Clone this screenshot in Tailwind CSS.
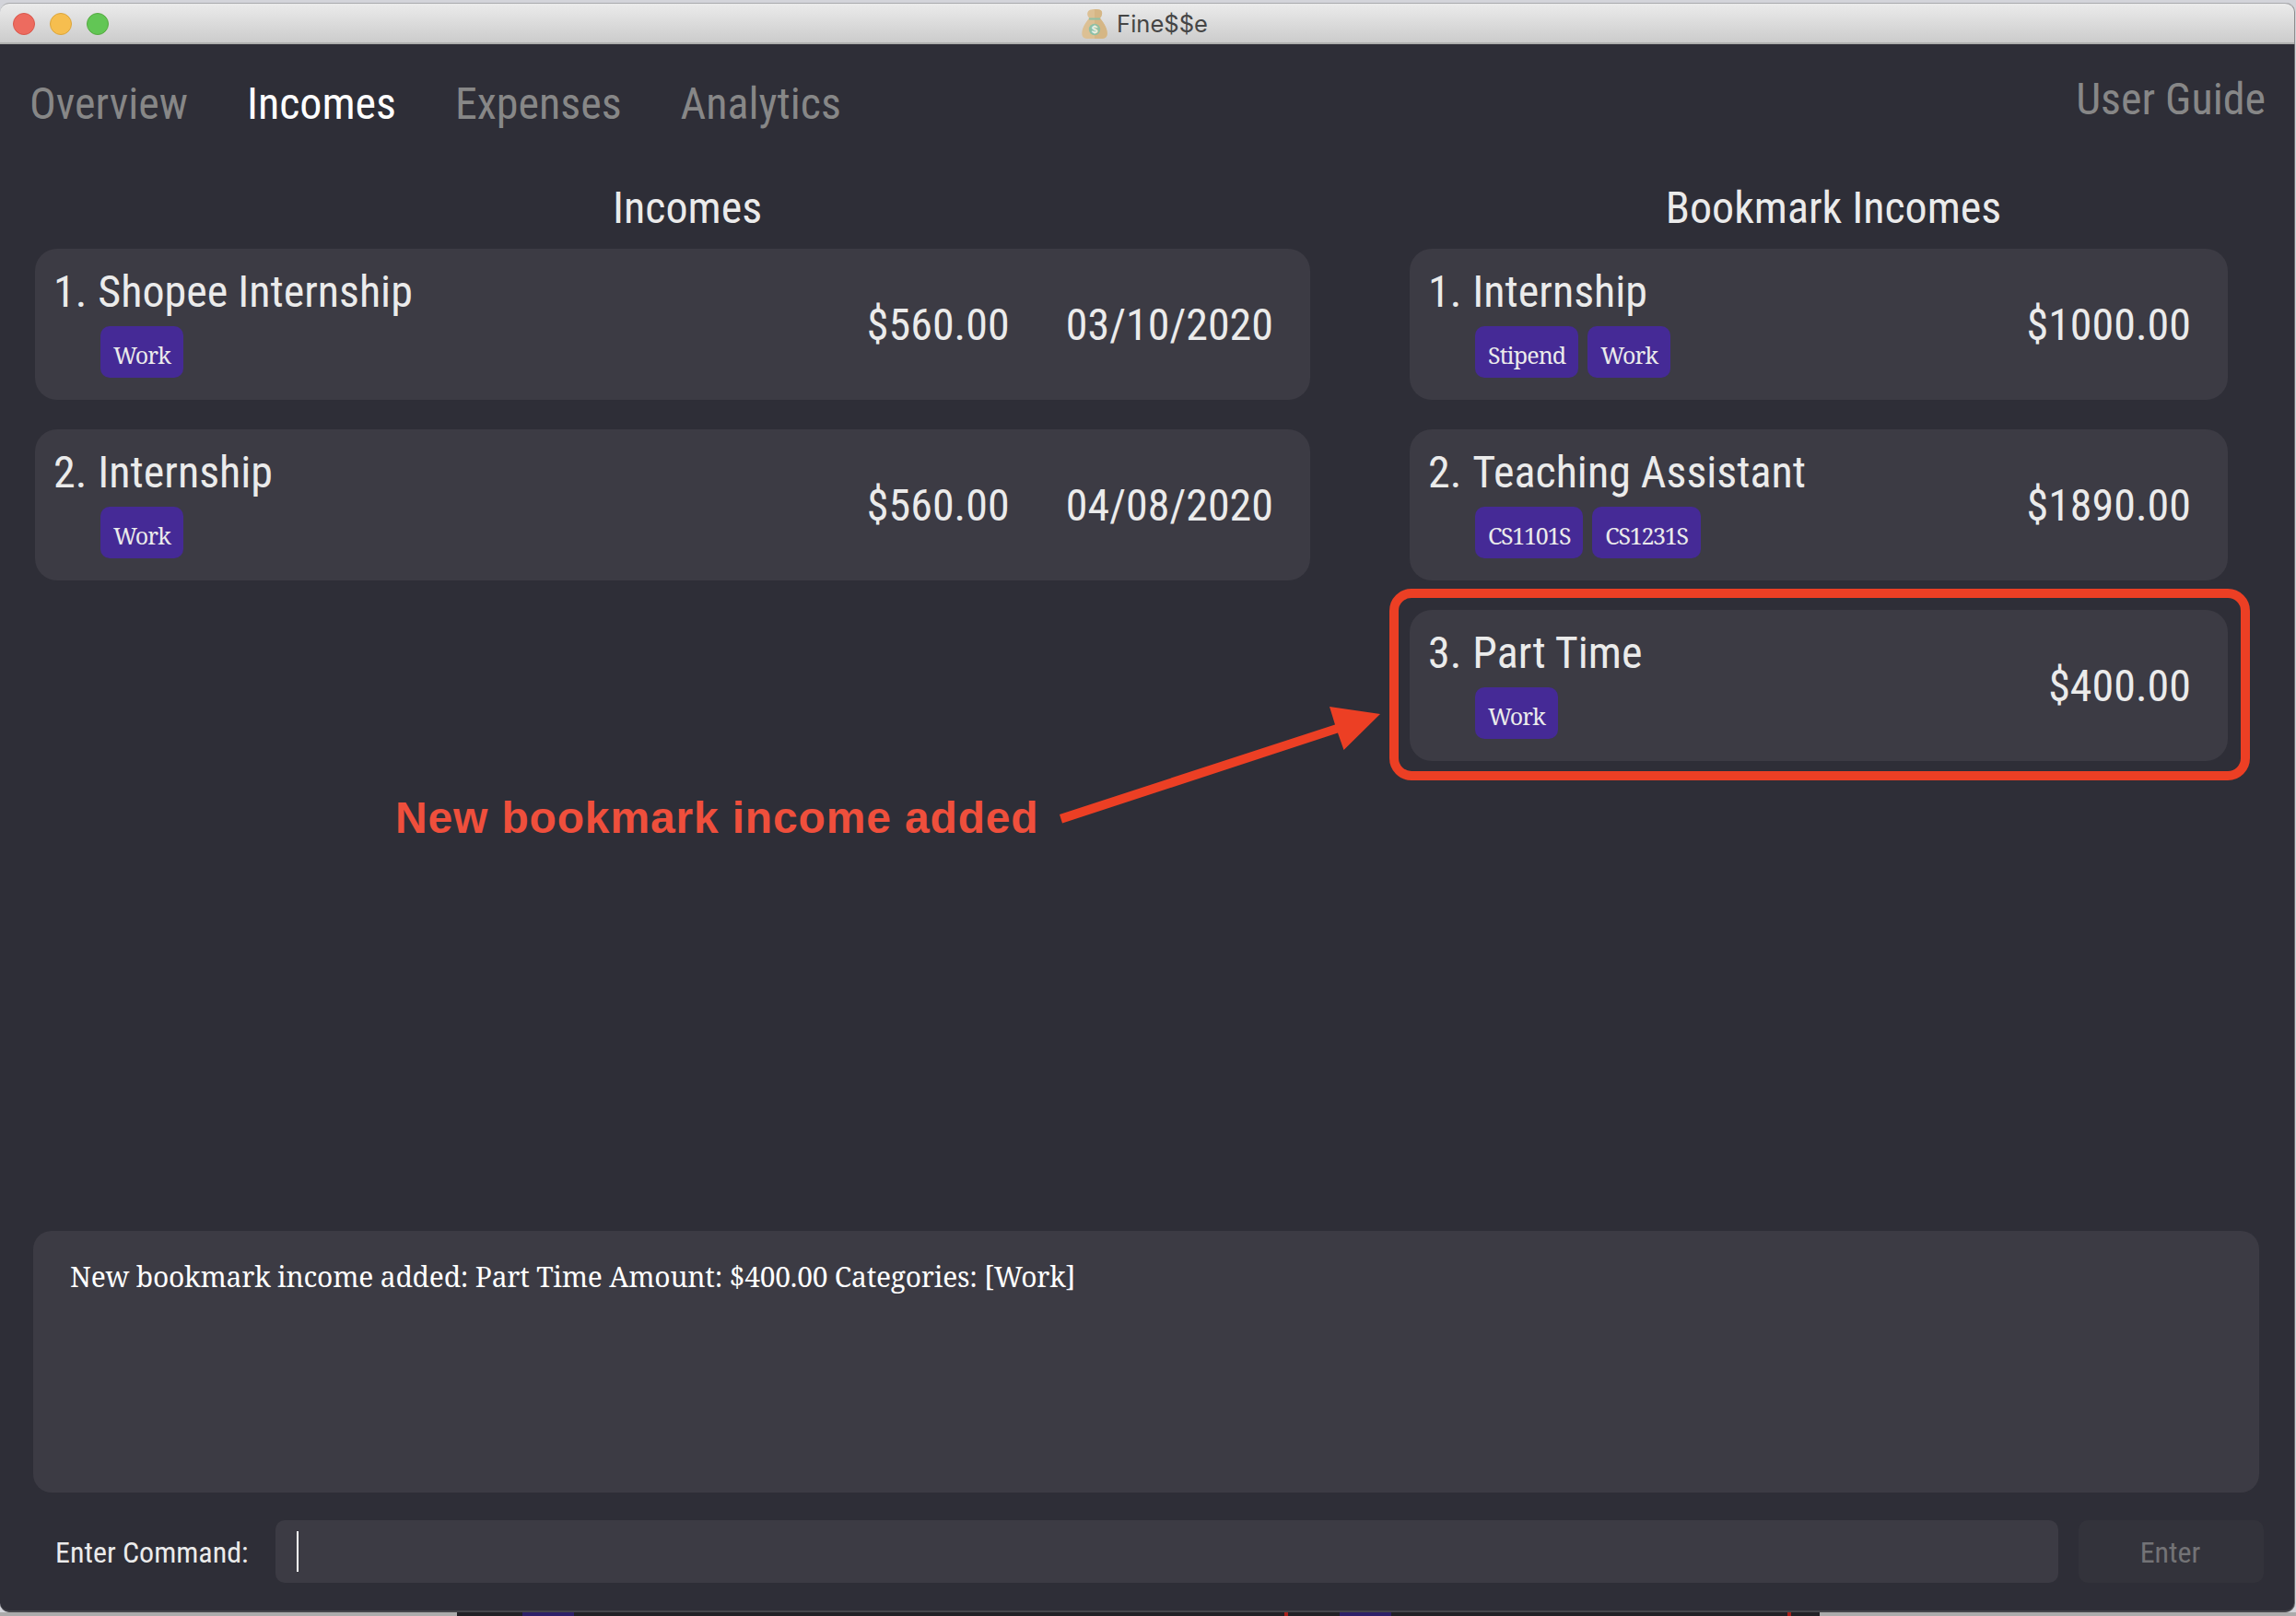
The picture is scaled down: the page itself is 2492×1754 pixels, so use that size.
<!DOCTYPE html>
<html lang="en">
<head>
<meta charset="utf-8">
<title>Fine$$e</title>
<script src="https://cdn.jsdelivr.net/npm/@tailwindcss/browser@4"></script>
</head>
<body class="relative h-[1754px] w-[2492px] overflow-hidden bg-[#d3d4da] font-['Roboto_Condensed',Roboto,sans-serif] text-[#ebebeb]">

  <!-- Window -->
  <div class="flex h-[1750px] w-[2490px] flex-col pt-[3px]">
    <!-- Title bar -->
    <div class="relative flex h-[45px] shrink-0 items-center justify-center rounded-t-[10px] border-t border-b-2 border-t-[#a9aaad] border-b-[#aeafae] bg-linear-to-b from-[#ebebeb] to-[#cccccc] shadow-[1px_0_0_#8c8c8c]">
      <div class="absolute left-3.5 top-[10px] flex gap-4">
        <span class="size-6 rounded-full border border-[#d9574c] bg-[#ed6b5f]"></span>
        <span class="size-6 rounded-full border border-[#dba53c] bg-[#f6be4f]"></span>
        <span class="size-6 rounded-full border border-[#55a941] bg-[#62c655]"></span>
      </div>
      <div class="flex items-center gap-2.5 pr-[5px] pt-0.5">
        <svg class="h-8 w-7" viewBox="0 0 28 32">
          <path d="M8 9.500C5 6 6 2 9 .8c3-1 9-1 11.500.2C23 2.500 22.500 7 20 9.500c2 3.500 7.500 9 7.800 16.500.1 4-2.300 5.800-5.300 6h-17C2.500 31.800.2 30 .3 26 .5 18.500 6 13 8 9.500Z" fill="#dcc094"/>
          <path d="M14 0c2.500 0 5 .3 6.500 1C23 2.500 22.500 7 20 9.500c2 3.500 7.500 9 7.800 16.500.1 4-2.300 5.800-5.300 6H14Z" fill="#d5b685"/>
          <path d="M8 9.500h12v2H8Z" fill="#8fc0a4"/>
          <circle cx="14" cy="22" r="6.200" fill="#8fc0a4"/>
          <text x="14" y="26" text-anchor="middle" font-size="11" font-weight="700" font-family="Inter, sans-serif" fill="#f0f0e4">$</text>
        </svg>
        <span class="font-[Inter,sans-serif] text-[25.500px] leading-8 text-[#454545]">Fine$$e</span>
      </div>
    </div>

    <!-- App body -->
    <div class="relative flex min-h-0 flex-1 flex-col rounded-b-[10px] border-b-2 border-[#45454a] bg-[#2e2e37] shadow-[1px_0_0_#6b6b6e]">
      <!-- Navigation -->
      <nav class="flex h-[150px] shrink-0 items-start justify-between pl-8 pr-[31px] text-[48px] leading-[56px] text-[#878787]">
        <div class="flex gap-16 pt-[37px]">
          <span>Overview</span>
          <span class="text-white">Incomes</span>
          <span>Expenses</span>
          <span>Analytics</span>
        </div>
        <span class="pt-8">User Guide</span>
      </nav>

      <!-- Lists -->
      <main class="flex h-[1138px] shrink-0 gap-[108px] pl-[38px] text-[48px] leading-[56px]">
        <section class="w-[1384px]">
          <h2 class="h-[72px] pl-8 text-center">Incomes</h2>
          <div class="flex flex-col gap-8">
            <article class="flex h-[164px] items-center rounded-3xl bg-[#3c3b44] pl-5 pr-10">
              <div class="h-full flex-1 pt-[19px]">
                <div class="flex gap-3"><span>1.</span><span>Shopee Internship</span></div>
                <div class="ml-[51px] mt-[9px] flex gap-2.5 font-['Noto_Serif',serif] text-[25px] tracking-[-0.9px]">
                  <span class="h-14 rounded-[10px] bg-[#452a96] px-[14px] leading-[62px]">Work</span>
                </div>
              </div>
              <span class="w-[216px] pt-0.5">$560.00</span>
              <span class="pt-0.5">03/10/2020</span>
            </article>
            <article class="flex h-[164px] items-center rounded-3xl bg-[#3c3b44] pl-5 pr-10">
              <div class="h-full flex-1 pt-[19px]">
                <div class="flex gap-3"><span>2.</span><span>Internship</span></div>
                <div class="ml-[51px] mt-[9px] flex gap-2.5 font-['Noto_Serif',serif] text-[25px] tracking-[-0.9px]">
                  <span class="h-14 rounded-[10px] bg-[#452a96] px-[14px] leading-[62px]">Work</span>
                </div>
              </div>
              <span class="w-[216px] pt-0.5">$560.00</span>
              <span class="pt-0.5">04/08/2020</span>
            </article>
          </div>
        </section>

        <section class="w-[888px]">
          <h2 class="h-[72px] pl-8 text-center">Bookmark Incomes</h2>
          <div class="flex flex-col gap-8">
            <article class="flex h-[164px] items-center rounded-3xl bg-[#3c3b44] pl-5 pr-10">
              <div class="h-full flex-1 pt-[19px]">
                <div class="flex gap-3"><span>1.</span><span>Internship</span></div>
                <div class="ml-[51px] mt-[9px] flex gap-2.5 font-['Noto_Serif',serif] text-[25px] tracking-[-0.9px]">
                  <span class="h-14 rounded-[10px] bg-[#452a96] px-[14px] leading-[62px]">Stipend</span>
                  <span class="h-14 rounded-[10px] bg-[#452a96] px-[14px] leading-[62px]">Work</span>
                </div>
              </div>
              <span class="pt-0.5">$1000.00</span>
            </article>
            <article class="flex h-[164px] items-center rounded-3xl bg-[#3c3b44] pl-5 pr-10">
              <div class="h-full flex-1 pt-[19px]">
                <div class="flex gap-3"><span>2.</span><span>Teaching Assistant</span></div>
                <div class="ml-[51px] mt-[9px] flex gap-2.5 font-['Noto_Serif',serif] text-[25px] tracking-[-1.3px]">
                  <span class="h-14 rounded-[10px] bg-[#452a96] px-[14px] leading-[62px]">CS1101S</span>
                  <span class="h-14 rounded-[10px] bg-[#452a96] px-[14px] leading-[62px]">CS1231S</span>
                </div>
              </div>
              <span class="pt-0.5">$1890.00</span>
            </article>
            <article class="relative flex h-[164px] items-center rounded-3xl bg-[#3c3b44] pl-5 pr-10">
              <div class="h-full flex-1 pt-[19px]">
                <div class="flex gap-3"><span>3.</span><span>Part Time</span></div>
                <div class="ml-[51px] mt-[9px] flex gap-2.5 font-['Noto_Serif',serif] text-[25px] tracking-[-0.9px]">
                  <span class="h-14 rounded-[10px] bg-[#452a96] px-[14px] leading-[62px]">Work</span>
                </div>
              </div>
              <span class="pt-0.5">$400.00</span>
              <!-- Highlight around the new entry -->
              <div class="absolute -bottom-[21px] -left-[22px] -right-[24px] -top-[23px] rounded-3xl border-[10px] border-[#ec3f24]"></div>
            </article>
          </div>
        </section>
      </main>

      <!-- Result display -->
      <div class="ml-9 mr-[38px] h-[284px] shrink-0 rounded-[20px] bg-[#3c3b44] pl-10 pt-[28px] font-['Noto_Serif',serif] text-[30px] leading-[44px] tracking-[-0.22px] text-white">
        <span>New bookmark income added: Part Time Amount: $400.00 Categories: [Work]</span>
      </div>

      <!-- Command bar -->
      <div class="mt-[30px] flex h-[68px] shrink-0 items-center pl-[60px] pr-[33px] text-[32px] leading-[38px]">
        <span class="w-[239px] pt-0.5">Enter Command:</span>
        <div class="flex h-full w-[1935px] items-center rounded-[10px] bg-[#3c3b44] pl-[23px]">
          <span class="h-11 w-0.5 bg-white"></span>
        </div>
        <div class="ml-[22px] flex h-full flex-1 items-center justify-center rounded-[10px] bg-[#33333b] pr-0.5 pt-0.5 text-[#737376]">Enter</div>
      </div>
    </div>
  </div>

  <!-- Desktop showing below the window -->
  <div class="flex h-1">
    <div class="w-[496px] bg-[#ababab]"></div>
    <div class="flex w-[1479px] bg-[#222126]">
      <div class="ml-[71px] w-14 bg-[#2e2069]"></div>
      <div class="ml-[771px] w-1 bg-[#a8201a]"></div>
      <div class="ml-[56px] w-14 bg-[#2e2069]"></div>
      <div class="ml-[430px] w-1 bg-[#a8201a]"></div>
    </div>
    <div class="flex-1 bg-[#ababab]"></div>
  </div>

  <!-- Annotation -->
  <div class="absolute left-[429px] top-[860px] whitespace-nowrap font-['Liberation_Sans',Arial,sans-serif] text-[48px] font-bold leading-[56px] tracking-[0.840px] text-[#ef4f3c]">New bookmark income added</div>
  <svg class="absolute left-[1140px] top-[760px] h-[140px] w-[370px]" viewBox="1140 760 370 140" fill="#ec3f24">
    <path d="M1150 884L1449 786.500L1443 767L1498 775L1458.500 814L1452 795.500L1153 893.500Z"/>
  </svg>
</body>
</html>
